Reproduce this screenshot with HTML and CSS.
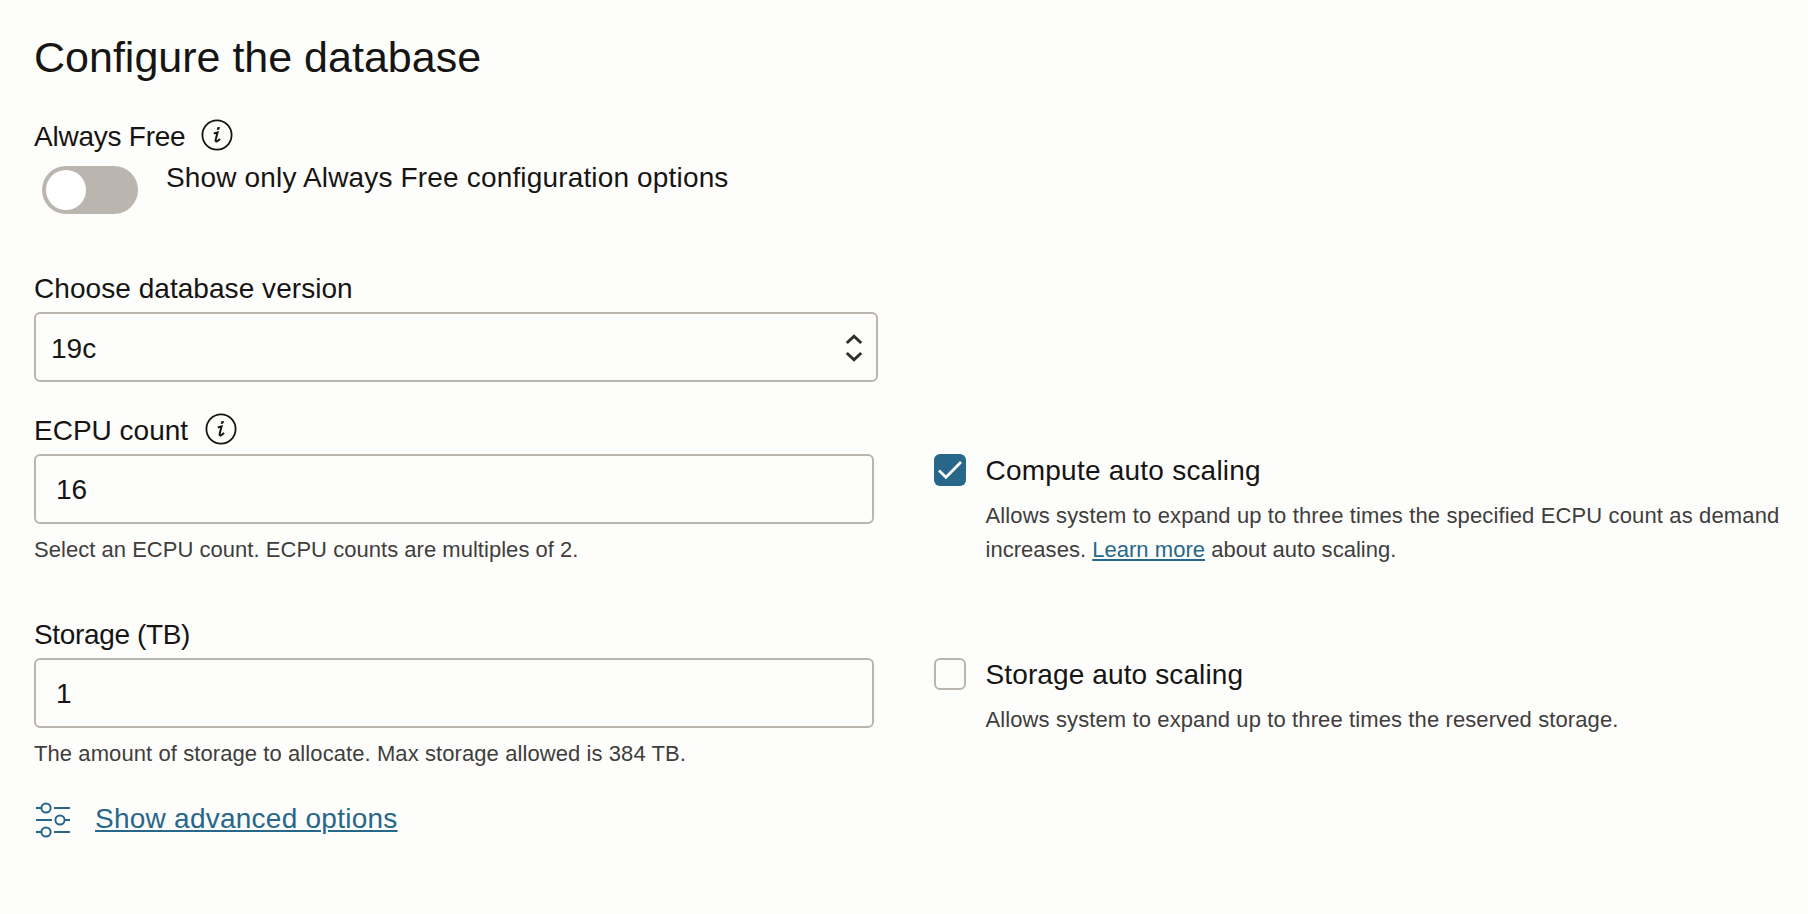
FILE: index.html
```html
<!DOCTYPE html>
<html lang="en">
<head>
<meta charset="utf-8">
<title>Configure the database</title>
<link rel="stylesheet" href="styles.css">
</head>
<body>
<main class="page">
  <h1 class="title">Configure the database</h1>

  <section class="free">
    <div class="label label-free"><span class="t-free">Always Free</span>
      <svg class="info" viewBox="0 0 32 32"><circle cx="16" cy="16" r="14.6"/><path class="dot" d="M16.4 8.3 19 7.9 18.3 10.6 15.7 10.9Z"/><path class="stem" d="M12.8 14.5 16.6 13.5 14.7 20.6Q14.2 22.9 16 22.3 17.7 21.5 19 19.9"/></svg>
    </div>
    <div class="toggle-row">
      <span class="toggle"><span class="knob"></span></span>
      <span class="toggle-text">Show only Always Free configuration options</span>
    </div>
  </section>

  <section class="version">
    <div class="label t-version">Choose database version</div>
    <div class="box select"><span class="t-19c">19c</span>
      <svg class="chevrons" viewBox="0 0 20 32"><path d="M2.8 11 10 4.2 17.2 11M2.8 21 10 27.8 17.2 21"/></svg>
    </div>
  </section>

  <section class="row row-ecpu">
    <div class="field">
      <div class="label label-ecpu"><span class="t-ecpu">ECPU count</span>
        <svg class="info" viewBox="0 0 32 32"><circle cx="16" cy="16" r="14.6"/><path class="dot" d="M16.4 8.3 19 7.9 18.3 10.6 15.7 10.9Z"/><path class="stem" d="M12.8 14.5 16.6 13.5 14.7 20.6Q14.2 22.9 16 22.3 17.7 21.5 19 19.9"/></svg>
      </div>
      <div class="box input">16</div>
      <div class="help t-help1">Select an ECPU count. ECPU counts are multiples of 2.</div>
    </div>
    <div class="option">
      <span class="check checked"><svg viewBox="0 0 32 32"><path d="M5 16.5 12 23.3 27 8"/></svg></span>
      <div class="option-body">
        <div class="option-title t-compute">Compute auto scaling</div>
        <div class="desc"><span class="t-desc1">Allows system to expand up to three times the specified ECPU count as demand</span><br><span class="t-desc2">increases. <a class="link" href="#">Learn more</a> about auto scaling.</span></div>
      </div>
    </div>
  </section>

  <section class="row row-storage">
    <div class="field">
      <div class="label t-storage">Storage (TB)</div>
      <div class="box input">1</div>
      <div class="help t-help2">The amount of storage to allocate. Max storage allowed is 384 TB.</div>
    </div>
    <div class="option">
      <span class="check"></span>
      <div class="option-body">
        <div class="option-title t-sauto">Storage auto scaling</div>
        <div class="desc t-desc3">Allows system to expand up to three times the reserved storage.</div>
      </div>
    </div>
  </section>

  <div class="advanced">
    <svg class="sliders" viewBox="0 0 36 36"><path d="M1 6H6M19 6H35M1 18H17M30 18H35M1 30H6M19 30H35"/><circle cx="11" cy="6" r="4.6"/><circle cx="25" cy="18" r="4.6"/><circle cx="11" cy="30" r="4.6"/></svg>
    <a class="link t-adv" href="#">Show advanced options</a>
  </div>
</main>
</body>
</html>
```
FILE: styles.css
```css
* { box-sizing: border-box; }
body {
  margin: 0;
  background: #fdfdfb;
  color: #161513;
  font-family: "Liberation Sans", Arial, sans-serif;
  font-size: 28px;
  line-height: 32px;
  white-space: nowrap;
}
svg { display: block; fill: none; }
.page { display: flex; flex-direction: column; padding: 32px 0 0 34px; height: 914px; overflow: hidden; }
.title { margin: 0; font-size: 43px; font-weight: 400; line-height: 50px; }

.label { display: flex; align-items: flex-start; height: 40px; padding-top: 1px; }
.info { width: 32px; height: 32px; margin: -2px 0 0 16px; stroke: #161513; stroke-width: 1.8; }
.label-ecpu .info { margin-left: 17px; }
.info .dot { fill: #161513; stroke: none; }
.info .stem { stroke-width: 2; }

.free { margin-top: 38px; }
.toggle-row { display: flex; margin-top: 6px; padding-left: 8px; height: 48px; }
.toggle { width: 96px; height: 48px; padding: 4px; border-radius: 24px; background: #bbb5b0; }
.knob { display: block; width: 40px; height: 40px; border-radius: 50%; background: #fff; }
.toggle-text { margin: -4px 0 0 28px; letter-spacing: 0.16px; }

.version { margin-top: 58px; }
.box { display: flex; align-items: center; height: 70px; border: 2px solid #bbb5b0; border-radius: 6px; padding-top: 2px; }
.select { width: 844px; padding: 4px 12px 0 15px; justify-content: space-between; }
.chevrons { width: 20px; height: 32px; stroke: #2f2e2c; stroke-width: 3; margin-top: -2px; }
.input { width: 840px; padding-left: 20px; }

.row { display: flex; }
.row-ecpu { margin-top: 32px; }
.row-storage { margin-top: 51px; }
.field { width: 900px; }
.help { margin-top: 9px; font-size: 22px; line-height: 34px; color: #403e3c; }
.option { display: flex; padding-top: 40px; }
.check { width: 32px; height: 32px; border: 2px solid #bbb5b0; border-radius: 6px; }
.checked { border: 0; background: #276789; }
.checked svg { width: 32px; height: 32px; stroke: #fff; stroke-width: 2.7; }
.option-body { margin-left: 19.5px; padding-top: 1px; }
.desc { margin-top: 12px; font-size: 22px; line-height: 34px; color: #403e3c; }
.link { color: #276789; text-decoration: underline; text-decoration-thickness: 2px; text-underline-offset: 2px; }

.advanced { display: flex; margin-top: 30px; }
.sliders { width: 36px; height: 36px; margin: 1px 24px 0 1px; stroke: #276789; stroke-width: 2; }
.advanced .link { margin-top: 2px; }

/* Optical tracking per string */
.t-free { letter-spacing: -0.24px; }
.t-version { letter-spacing: 0.05px; }
.t-storage { letter-spacing: -0.35px; }
.t-compute { letter-spacing: 0.23px; }
.t-sauto { letter-spacing: 0.12px; }
.t-help1 { letter-spacing: 0.03px; }
.t-help2 { letter-spacing: 0.085px; }
.t-desc1 { letter-spacing: 0.132px; }
.t-desc2 { letter-spacing: 0.03px; }
.t-desc3 { letter-spacing: 0.11px; }
.t-adv { letter-spacing: 0.25px; }
```
